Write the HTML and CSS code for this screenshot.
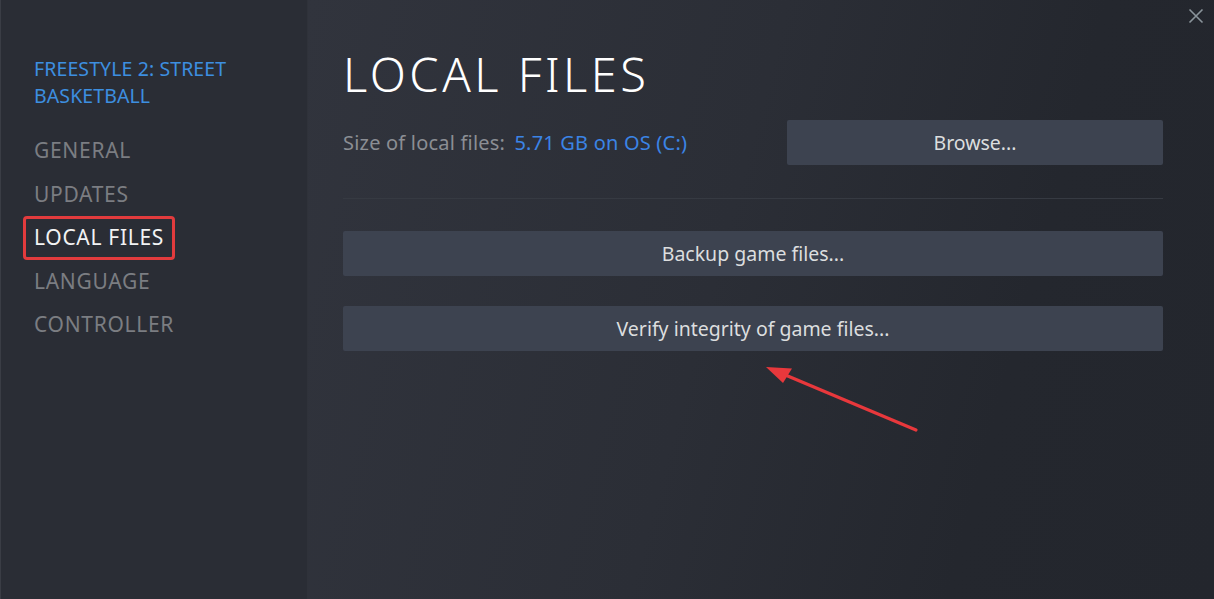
FILE: index.html
```html
<!DOCTYPE html>
<html lang="en">
<head>
    <meta charset="UTF-8">
    <meta name="viewport" content="width=device-width, initial-scale=1.0">
    <title>Properties - Local Files</title>
    <link rel="stylesheet" href="styles.css">
</head>
<body>
    <div class="window">
        <aside class="sidebar">
            <div class="game-title">FREESTYLE 2: STREET BASKETBALL</div>
            <ul class="nav">
                <li class="nav-item">GENERAL</li>
                <li class="nav-item">UPDATES</li>
                <li class="nav-item active">LOCAL FILES</li>
                <li class="nav-item">LANGUAGE</li>
                <li class="nav-item">CONTROLLER</li>
            </ul>
        </aside>

        <main class="content">
            <h1>LOCAL FILES</h1>

            <div class="size-row">
                <p class="size-label">Size of local files: <span class="size-value">5.71 GB on OS (C:)</span></p>
                <button class="btn btn-browse">Browse...</button>
            </div>

            <hr class="divider">

            <div class="actions">
                <button class="btn">Backup game files...</button>
                <button class="btn">Verify integrity of game files...</button>
            </div>
        </main>

        <button class="close" aria-label="Close">
            <svg width="16" height="16" viewBox="0 0 16 16">
                <path d="M1.5 1.5 L14.5 14.5 M14.5 1.5 L1.5 14.5" stroke="#8a949b" stroke-width="1.6" fill="none"/>
            </svg>
        </button>

        <!-- annotation arrow -->
        <svg class="arrow" width="180" height="90" viewBox="750 355 180 90">
            <line x1="916" y1="430" x2="783" y2="374" stroke="#e8383c" stroke-width="3.2" stroke-linecap="round"/>
            <polygon points="766,367 792,368.5 783,383" fill="#e8383c"/>
        </svg>
    </div>
</body>
</html>
```

FILE: styles.css
```css
body {
    margin: 0;
    padding: 0;
    font-family: 'Noto Sans', 'Open Sans', sans-serif;
    background-color: #23262d;
    color: #dcdedf;
}

.window {
    position: relative;
    display: flex;
    height: 599px;
    overflow: hidden;
}

/* Left navigation */
.sidebar {
    width: 308px;
    flex-shrink: 0;
    background-color: #2a2d35;
    border-left: 1px solid #3a3d45;
    border-right: 1px solid #2f323a;
    box-sizing: border-box;
    padding-top: 55px;
}

.game-title {
    margin: 0 40px 0 33px;
    font-size: 19.5px;
    letter-spacing: 0.1px;
    line-height: 27px;
    color: #3d8fe0;
}

.nav {
    list-style-type: none;
    margin: 20px 0 0;
    padding: 0;
}

.nav-item {
    width: fit-content;
    margin-left: 22px;
    padding: 0 8px;
    border: 3px solid transparent;
    border-radius: 4px;
    font-size: 21px;
    letter-spacing: 0.7px;
    line-height: 37.5px;
    color: #7b7d82;
}

.nav-item.active {
    color: #f2f3f4;
    border-color: #e23b3d;
}

/* Main panel */
.content {
    flex: 1;
    padding: 44px 51px 0 35px;
    background: linear-gradient(105deg, #31343d 0%, #2b2e36 45%, #24272e 75%, #23262d 100%);
}

h1 {
    margin: 0;
    font-size: 47px;
    font-weight: 300;
    letter-spacing: 3.5px;
    line-height: 60px;
    color: #ffffff;
}

.size-row {
    display: flex;
    align-items: center;
    margin-top: 16px;
}

.size-label {
    flex: 1;
    margin: 0;
    font-size: 20px;
    letter-spacing: 0.2px;
    color: #8b8e94;
}

.size-value {
    margin-left: 4px;
    color: #3b84e6;
}

.btn {
    display: block;
    height: 45px;
    border: none;
    border-radius: 2px;
    background-color: #3d4350;
    color: #dcdedf;
    font-family: inherit;
    font-size: 19.5px;
    cursor: pointer;
}

.btn-browse {
    width: 376px;
}

.divider {
    margin: 33px 0 0;
    border: none;
    border-top: 1px solid #363a42;
}

.actions {
    display: flex;
    flex-direction: column;
    gap: 30px;
    margin-top: 32px;
}

.actions .btn {
    width: 100%;
}

.close {
    position: absolute;
    top: 8px;
    right: 10px;
    padding: 0;
    border: none;
    background: none;
    width: 16px;
    height: 16px;
    cursor: pointer;
}

.arrow {
    position: absolute;
    left: 750px;
    top: 355px;
}
```
